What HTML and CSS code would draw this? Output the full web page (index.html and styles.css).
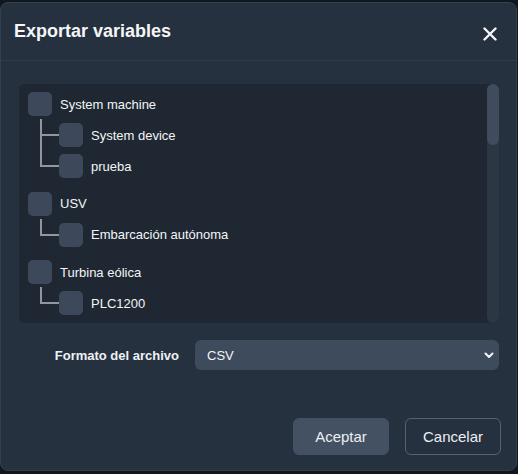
FILE: index.html
```html
<html>
<head>
  <title>Exportar variables</title>
  <link rel="stylesheet" href="styles.css">
</head>
<body>
  <div class="modal">
    <div class="modal-header">
      <h2 class="modal-title">Exportar variables</h2>
      <button type="button" class="close-btn" aria-label="Cerrar">
        <svg width="14" height="14" viewBox="0 0 14 14">
          <path d="M1.5 1.5 L12.5 12.5 M12.5 1.5 L1.5 12.5" stroke="#f4f6f8" stroke-width="2.4" stroke-linecap="round" fill="none"/>
        </svg>
      </button>
    </div>

    <div class="modal-body">
      <div class="tree-box">
        <ul class="tree">
          <li class="group">
            <label class="row"><span class="check"></span>System machine</label>
            <ul class="children">
              <li class="child"><label class="row"><span class="check"></span>System device</label></li>
              <li class="child"><label class="row"><span class="check"></span>prueba</label></li>
            </ul>
          </li>
          <li class="group">
            <label class="row"><span class="check"></span>USV</label>
            <ul class="children">
              <li class="child"><label class="row"><span class="check"></span>Embarcación autónoma</label></li>
            </ul>
          </li>
          <li class="group">
            <label class="row"><span class="check"></span>Turbina eólica</label>
            <ul class="children">
              <li class="child"><label class="row"><span class="check"></span>PLC1200</label></li>
            </ul>
          </li>
        </ul>
        <div class="scrollbar"><div class="thumb"></div></div>
      </div>

      <div class="format-row">
        <label class="format-label">Formato del archivo</label>
        <div class="select-wrap">
          <select class="select">
            <option>CSV</option>
          </select>
          <svg class="chevron" width="10" height="7" viewBox="0 0 10 7">
            <path d="M1.5 1.5 L5 5 L8.5 1.5" stroke="#f4f6f8" stroke-width="2" fill="none" stroke-linecap="round" stroke-linejoin="round"/>
          </svg>
        </div>
      </div>
    </div>

    <div class="modal-footer">
      <button type="button" class="btn btn-primary">Aceptar</button>
      <button type="button" class="btn btn-outline">Cancelar</button>
    </div>
  </div>
</body>
</html>
```

FILE: styles.css
```css
body {
  background-color: #11171e;
  color: #f1f3f5;
  font-family: "Liberation Sans", Arial, sans-serif;
  margin: 0;
  padding: 2px 0 0 0;
}

.modal {
  width: 517px;
  box-sizing: border-box;
  background-color: #263140;
  border: 1px solid #344050;
  border-radius: 8px;
}

.modal-header {
  height: 57px;
  display: flex;
  align-items: center;
  justify-content: space-between;
  padding: 0 19px 0 13px;
  border-bottom: 1px solid #323d4b;
}

.modal-title {
  margin: 0;
  font-size: 18px;
  font-weight: bold;
  color: #f4f6f8;
}

.close-btn {
  background: none;
  border: none;
  padding: 0;
  margin-top: 4px;
  width: 14px;
  height: 14px;
  cursor: pointer;
}

.modal-body {
  padding: 23px 17px 0 18px;
}

.tree-box {
  display: flex;
  height: 239px;
  background-color: #1f2832;
  border-radius: 5px;
  overflow: hidden;
}

.tree {
  flex: 1;
  list-style: none;
  margin: 0;
  padding: 8px 0 0 9px;
}

.group {
  margin-bottom: 13.5px;
}

.row {
  display: flex;
  align-items: center;
  gap: 8px;
  height: 24px;
  font-size: 13px;
  color: #f3f5f7;
}

.check {
  width: 24px;
  height: 24px;
  border-radius: 5px;
  background-color: #3d495b;
}

.children {
  list-style: none;
  margin: 0;
  padding: 0;
}

.child {
  position: relative;
  margin-top: 7px;
  padding-left: 31px;
}

.child::before {
  content: "";
  position: absolute;
  left: 12px;
  top: -19px;
  width: 19px;
  height: 32px;
  box-sizing: border-box;
  border-left: 2px solid #8f979f;
  border-bottom: 2px solid #8f979f;
}

.child:first-child::before {
  top: -4px;
  height: 17px;
}

.scrollbar {
  width: 12px;
  background-color: #2c3744;
  border-radius: 6px;
}

.thumb {
  height: 61px;
  background-color: #404c5d;
  border-radius: 6px;
}

.format-row {
  display: grid;
  grid-template-columns: 160px 1fr;
  gap: 16px;
  align-items: center;
  margin-top: 17px;
}

.format-label {
  text-align: right;
  font-size: 13px;
  font-weight: bold;
  color: #eef1f4;
}

.select-wrap {
  position: relative;
}

.select {
  width: 100%;
  height: 30px;
  appearance: none;
  background-color: #3e4b5d;
  color: #f3f5f7;
  border: none;
  border-radius: 6px;
  padding: 0 12px;
  font-family: "Liberation Sans", Arial, sans-serif;
  font-size: 13px;
}

.chevron {
  position: absolute;
  right: 5px;
  top: 12px;
}

.modal-footer {
  display: flex;
  justify-content: flex-end;
  gap: 16px;
  margin-top: 48px;
  padding: 0 15px 15px 0;
}

.btn {
  width: 96px;
  height: 37px;
  border-radius: 6px;
  font-family: "Liberation Sans", Arial, sans-serif;
  font-size: 15px;
  color: #eceff2;
  cursor: pointer;
}

.btn-primary {
  background-color: #435163;
  border: 1px solid #435163;
}

.btn-outline {
  background-color: transparent;
  border: 1px solid #56636f;
}
```
